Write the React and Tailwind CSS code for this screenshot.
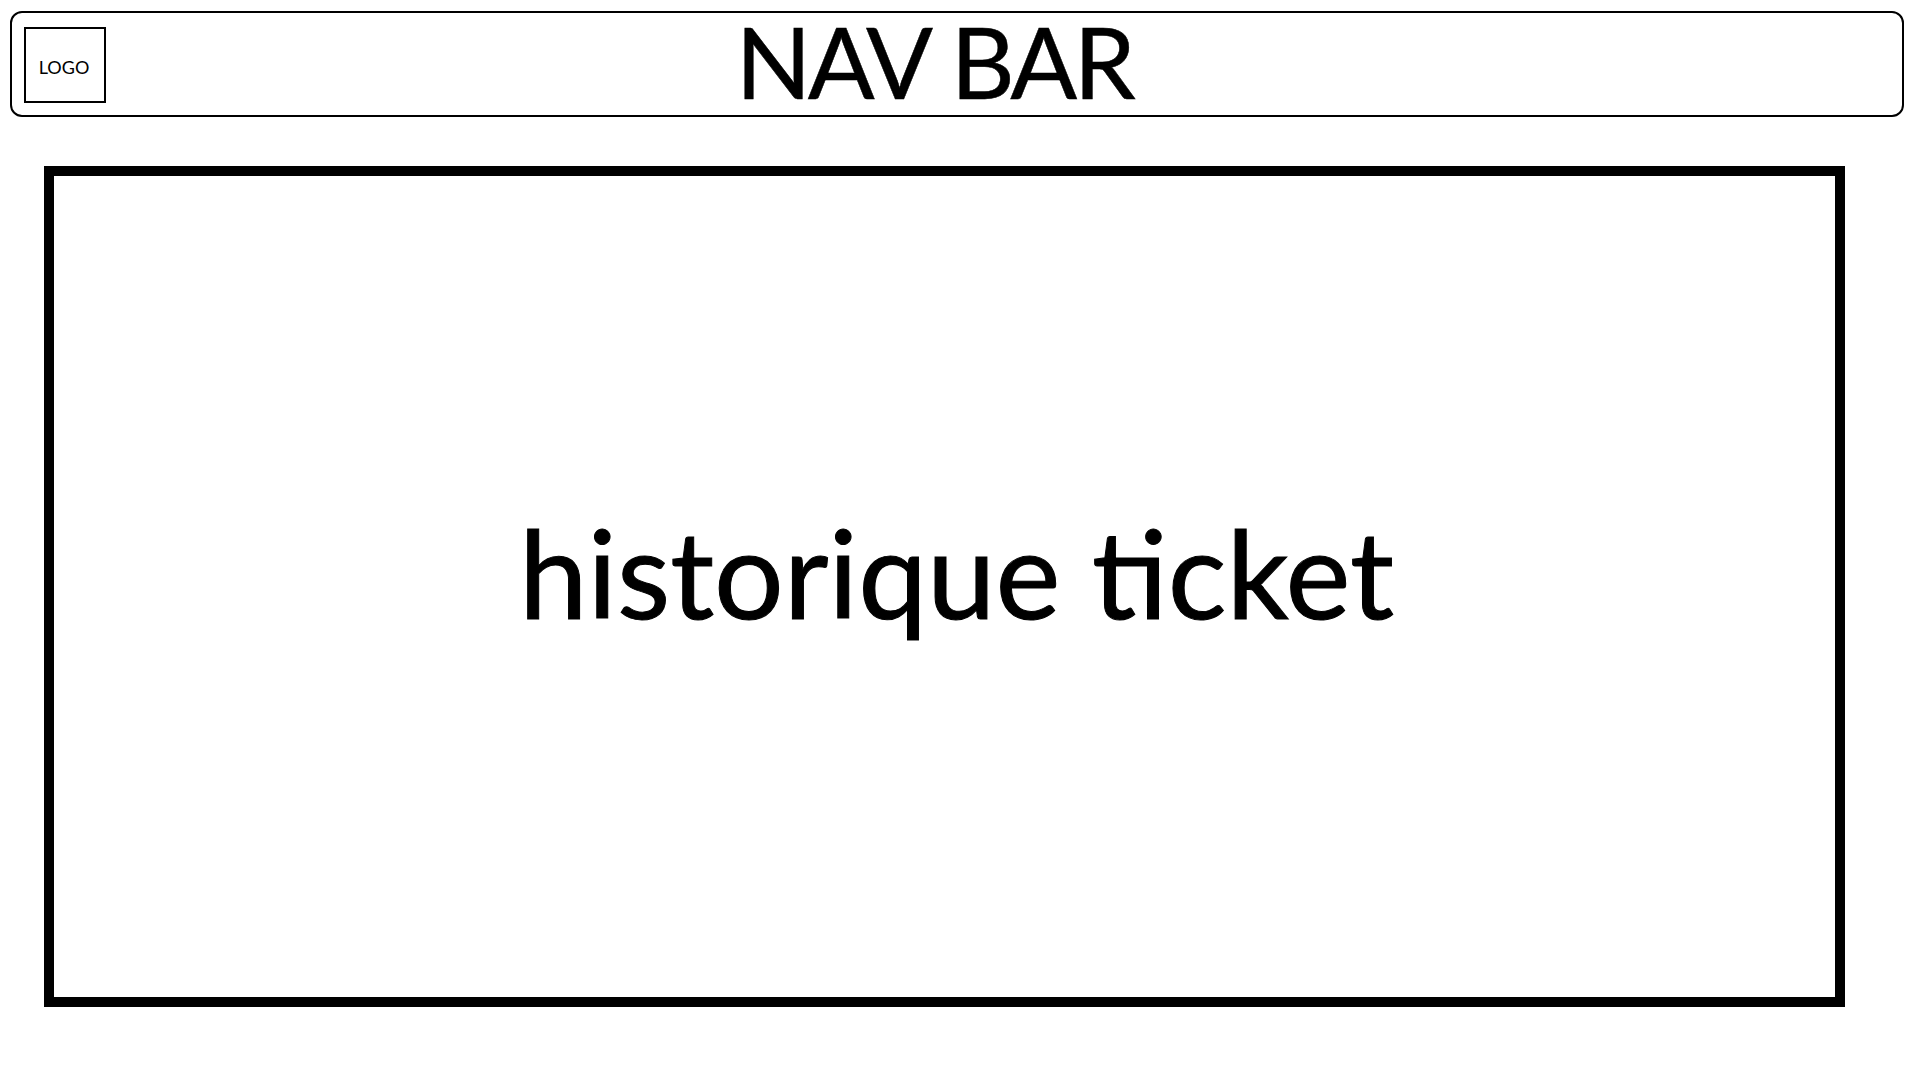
export default function App() {
  return (
    <div className="h-[1080px] w-[1920px] bg-white pt-[11px] text-black font-['Lato','Open_Sans',sans-serif]">
      {/* Nav bar */}
      <div className="ml-[10px] flex h-[106px] w-[1894px] items-center rounded-[12px] border-2 border-black pl-[12px]">
        <div className="mt-[2px] flex h-[76px] w-[82px] flex-none items-center justify-center border-2 border-black pt-[3px] pr-[2px] text-[18px] leading-none">
          LOGO
        </div>
        <div className="flex-1 pr-[140px] pb-[8px] text-center text-[99px] leading-none tracking-[-3.5px] [word-spacing:3px] [-webkit-text-stroke:0.5px_black]">
          NAV BAR
        </div>
      </div>

      {/* Main panel */}
      <div className="ml-[44px] mt-[49px] flex h-[841px] w-[1801px] items-center justify-center border-[10px] border-black pb-[30px] pl-[24px]">
        <span className="text-[123px] leading-none [-webkit-text-stroke:1px_black]">historique ticket</span>
      </div>
    </div>
  )
}
